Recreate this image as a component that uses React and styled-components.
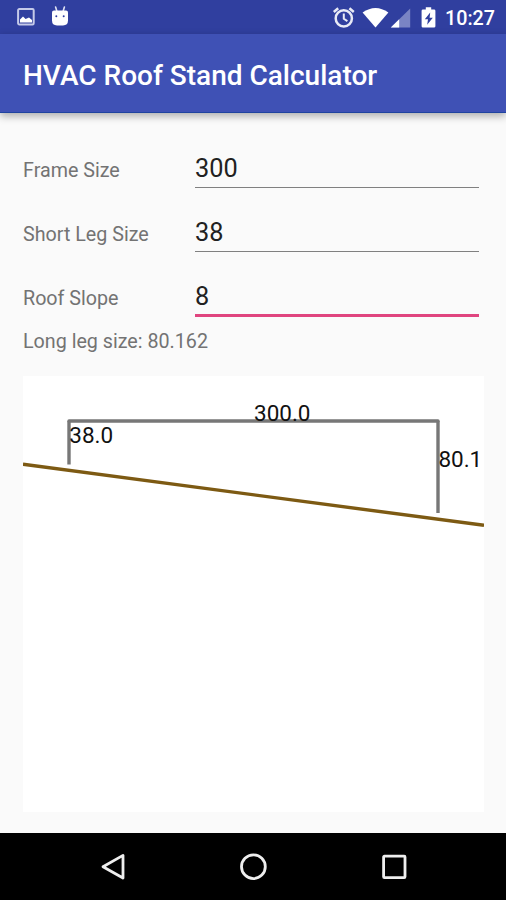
import React, { useState } from "react";
import styled, { createGlobalStyle } from "styled-components";

const App = () => {
  const [frame, setFrame] = useState("300");
  const [leg, setLeg] = useState("38");
  const [slope, setSlope] = useState("8");
  return (
    <Screen>
      <GlobalStyle />
      <StatusBar>
        <StatusGroup>
          <PictureIcon />
          <DroidIcon />
        </StatusGroup>
        <StatusGroup>
          <SystemIcons />
          <Clock>10:27</Clock>
        </StatusGroup>
      </StatusBar>
      <AppBar>
        <Title>HVAC Roof Stand Calculator</Title>
      </AppBar>
      <Content>
        <Row>
          <Label htmlFor="frame">Frame Size</Label>
          <Field
            id="frame"
            value={frame}
            onChange={(e) => setFrame(e.target.value)}
          />
        </Row>
        <Row>
          <Label htmlFor="leg">Short Leg Size</Label>
          <Field id="leg" value={leg} onChange={(e) => setLeg(e.target.value)} />
        </Row>
        <Row>
          <Label htmlFor="slope">Roof Slope</Label>
          <Field
            id="slope"
            $active
            value={slope}
            onChange={(e) => setSlope(e.target.value)}
          />
        </Row>
        <Result>Long leg size: 80.162</Result>
        <StandDrawing />
      </Content>
      <NavBar>
        <NavButton aria-label="Back">
          <svg width="30" height="30" viewBox="0 0 30 30">
            <path d="M25 3.4V26L5 14.7Z" />
          </svg>
        </NavButton>
        <NavButton aria-label="Home">
          <svg width="30" height="30" viewBox="0 0 30 30">
            <circle cx="15.4" cy="14.7" r="11.9" />
          </svg>
        </NavButton>
        <NavButton aria-label="Recent apps">
          <svg width="30" height="30" viewBox="0 0 30 30">
            <rect x="5.6" y="4.2" width="21.4" height="21.4" rx="0.8" />
          </svg>
        </NavButton>
      </NavBar>
    </Screen>
  );
};

const PictureIcon = () => (
  <svg width="18" height="18" viewBox="0 0 18 18">
    <rect
      x="1.1"
      y="1.1"
      width="15.6"
      height="15.4"
      rx="1.2"
      fill="none"
      stroke="#c5cae9"
      strokeWidth="2"
    />
    <path d="M3 14.6V11.4L6 8.6L8.6 11L12 9.4L15 12V14.6Z" fill="#fff" />
  </svg>
);

const DroidIcon = () => (
  <svg width="18" height="20" viewBox="0 0 18 20">
    <path
      d="M4.6 1L5.8 5M13.4 1L12.2 5"
      stroke="#dfe2f3"
      strokeWidth="1.6"
      strokeLinecap="round"
    />
    <path
      d="M1 6.2Q1 4.4 3 4.4H15Q17 4.4 17 6.2V14.5Q17 19.4 12 19.4H6Q1 19.4 1 14.5Z"
      fill="#fff"
    />
    <circle cx="5.3" cy="10.3" r="1" fill="#303f9f" />
    <circle cx="12.7" cy="10.3" r="1" fill="#303f9f" />
  </svg>
);

// alarm, wifi, mobile signal, charging battery
const SystemIcons = () => (
  <svg width="106" height="24" viewBox="0 0 106 24">
    <g fill="none" stroke="#e8eaf6" strokeWidth="2.5">
      <circle cx="11.8" cy="13.4" r="8.1" />
      <path d="M11.8 8.4V13.8L15.4 16.2" strokeWidth="2" />
      <path d="M1.8 7L6.2 3.3M21.8 7L17.4 3.3" />
    </g>
    <path d="M30.6 7.4Q43.5 -1.6 56.4 7.4L43.5 22.6Z" fill="#fff" />
    <path d="M78.2 3.4V22.6H58.8Z" fill="#7a84c4" />
    <path d="M67.2 14.3V22.6H58.8Z" fill="#fff" />
    <path
      d="M93.8 2.2H99.2V4.4H102Q103.4 4.4 103.4 5.8V21.2Q103.4 22.6 102 22.6H91Q89.6 22.6 89.6 21.2V5.8Q89.6 4.4 91 4.4H93.8Z"
      fill="#fff"
    />
    <path d="M98.2 7.6L92.8 14.2H96L95.2 19.8L100.8 12.8H97.6Z" fill="#303f9f" />
  </svg>
);

const StandDrawing = () => (
  <Drawing viewBox="0 0 461 436">
    <path
      d="M0 88.3L461 149.3"
      fill="none"
      stroke="#7d5a13"
      strokeWidth="3.4"
    />
    <g fill="none" stroke="#777" strokeWidth="3.4">
      <path d="M46 45H415" strokeLinecap="round" />
      <path d="M46 45V88.5" />
      <path d="M415 45V137" />
    </g>
    <text x="231" y="45">
      300.0
    </text>
    <text x="46.3" y="67.2">
      38.0
    </text>
    <text x="415.4" y="91">
      80.1
    </text>
  </Drawing>
);

const GlobalStyle = createGlobalStyle`
  * {
    box-sizing: border-box;
  }
  body {
    margin: 0;
    font-family: Roboto, sans-serif;
    background: #fafafa;
  }
`;
const Screen = styled.div`
  display: flex;
  flex-direction: column;
  width: 506px;
  height: 900px;
  overflow: hidden;
  background: #fafafa;
`;
const StatusBar = styled.div`
  display: flex;
  justify-content: space-between;
  align-items: center;
  height: 34px;
  padding: 0 11px 0 17px;
  background: #303f9f;
`;
const StatusGroup = styled.div`
  display: flex;
  align-items: center;
  gap: 16px;
  svg + svg {
    margin-top: -2px;
  }
`;
const Clock = styled.span`
  margin-left: -9px;
  padding-top: 2px;
  font-size: 19.7px;
  font-weight: 500;
  color: #fff;
`;
const AppBar = styled.header`
  display: flex;
  align-items: center;
  height: 79px;
  padding: 0 23px 0;
  background: #3f51b5;
  border-bottom: 1px solid #2044a0;
  box-shadow: 0 3px 8px rgba(0, 0, 0, 0.32);
`;
const Title = styled.h1`
  margin: 5px 0 0;
  font-size: 28px;
  font-weight: 500;
  line-height: 34px;
  color: #fff;
`;
const Content = styled.main`
  display: flex;
  flex-direction: column;
  flex: 1;
  padding: 35px 22px 21px 23px;
`;
const Row = styled.div`
  display: grid;
  grid-template-columns: 172px 284px;
  align-items: baseline;
  height: 64px;
`;
const Label = styled.label`
  font-size: 19.7px;
  color: #737373;
`;
const Field = styled.input`
  height: ${(props) => (props.$active ? "41px" : "40px")};
  padding: ${(props) => (props.$active ? "2px" : "1px")} 0 0;
  border: none;
  border-bottom: ${(props) =>
    props.$active ? "3px solid #e0457f" : "1px solid #808080"};
  border-radius: 0;
  outline: none;
  background: transparent;
  font-family: inherit;
  font-size: 25.3px;
  color: #212121;
`;
const Result = styled.div`
  height: 46px;
  margin-top: -10px;
  font-size: 19.7px;
  line-height: 24px;
  color: #737373;
`;
const Drawing = styled.svg`
  display: block;
  width: 461px;
  height: 436px;
  overflow: hidden;
  background: #fff;
  text {
    font-size: 22.5px;
    fill: #111;
  }
`;
const NavBar = styled.nav`
  display: flex;
  justify-content: center;
  align-items: center;
  gap: 80px;
  height: 67px;
  background: #000;
`;
const NavButton = styled.button`
  display: flex;
  justify-content: center;
  width: 60px;
  padding: 0;
  border: none;
  background: none;
  svg {
    fill: none;
    stroke: #eee;
    stroke-width: 2.8;
    stroke-linejoin: round;
  }
`;
export default App;
